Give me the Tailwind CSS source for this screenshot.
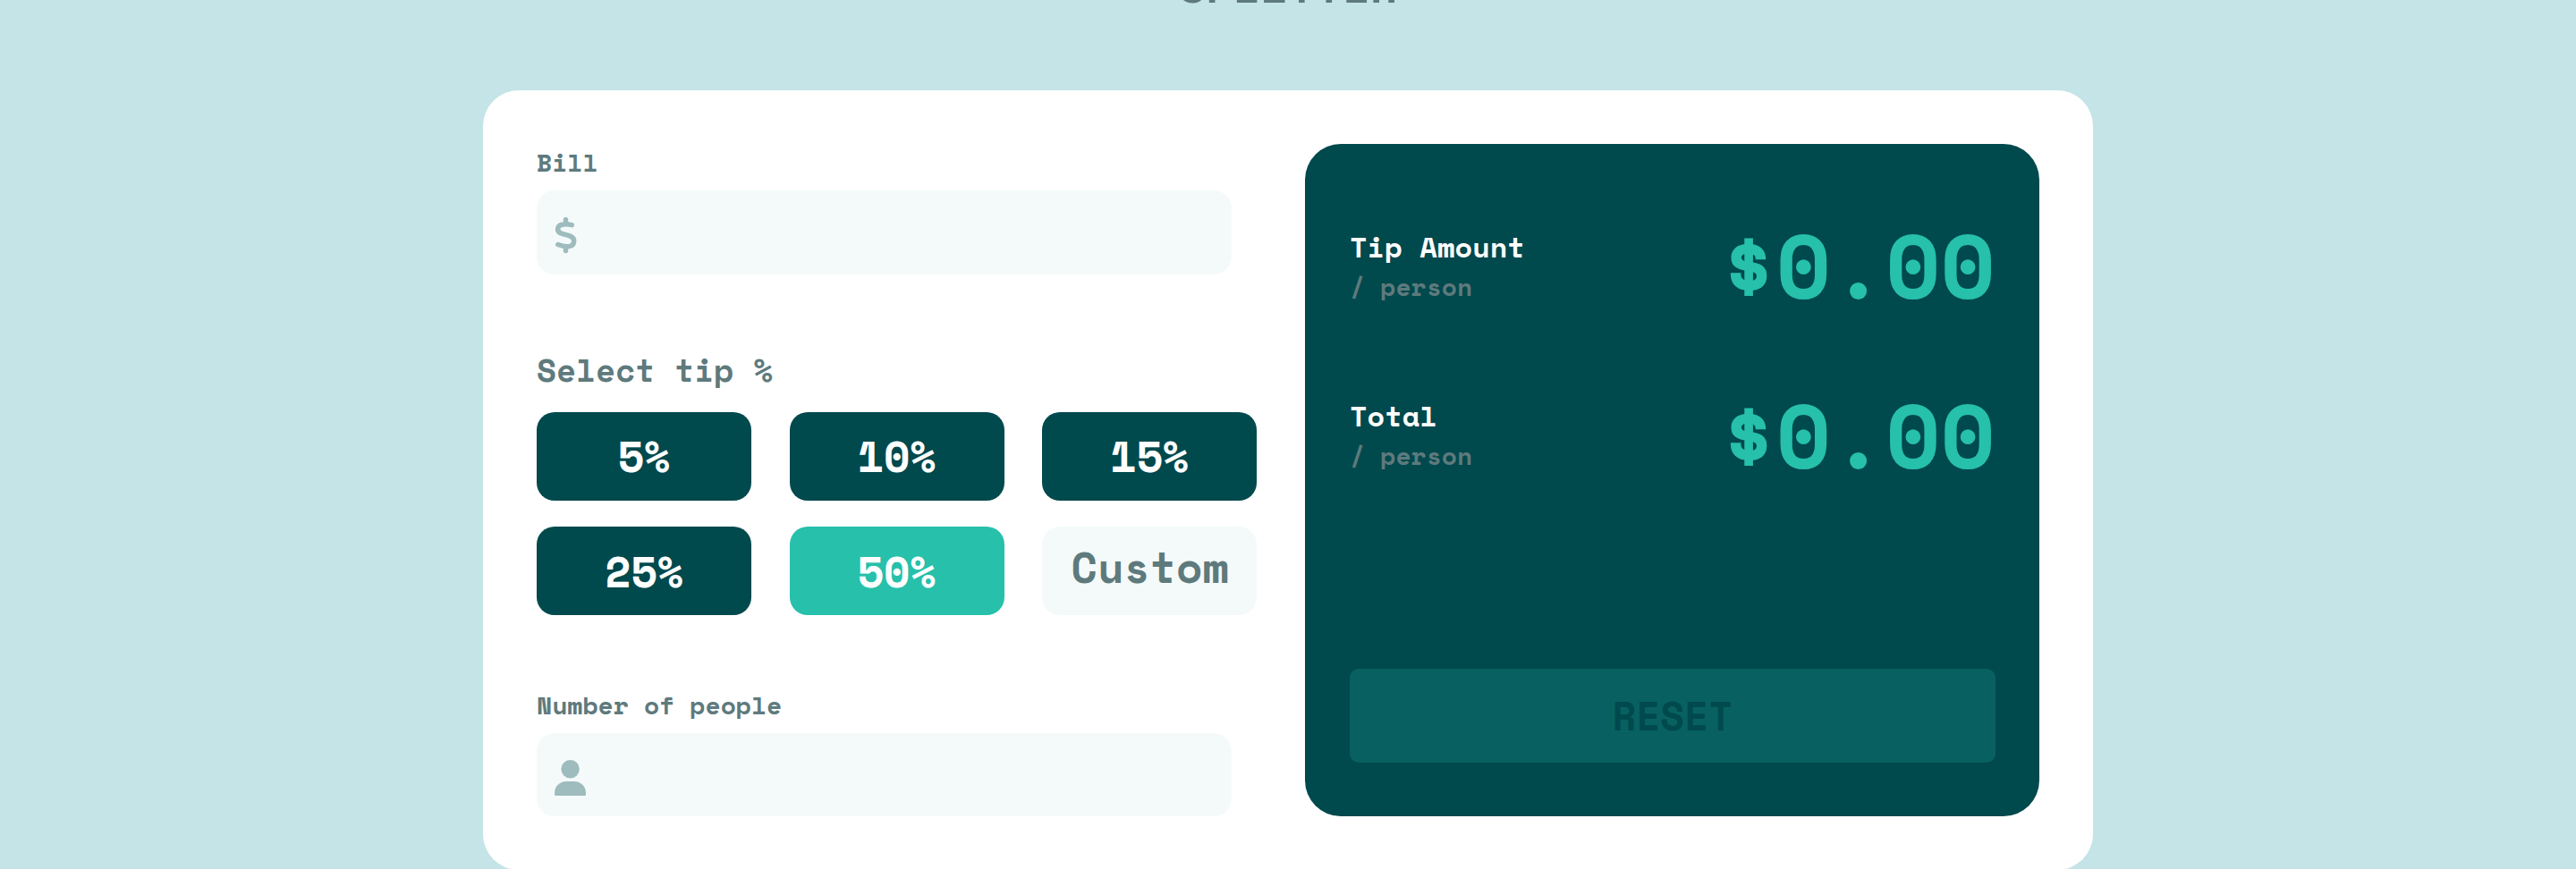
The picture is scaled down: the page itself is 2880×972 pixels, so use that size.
<!DOCTYPE html>
<html lang="en">
<head>
<meta charset="utf-8">
<title>Splitter</title>
<script src="https://cdn.jsdelivr.net/npm/@tailwindcss/browser@4"></script>
</head>
<body class="h-[972px] overflow-hidden bg-[#c5e4e7] font-['Space_Mono','Liberation_Mono',monospace] font-bold text-[#5e7a7d]">
  <h1 class="-mt-[48px] h-[149.3px] text-center text-[50px] leading-[64px]">SPLITTER</h1>
  <main class="mx-auto flex h-[872px] w-[1800px] rounded-[40px] bg-white p-[60px]">
    <section class="flex w-[777px] shrink-0 flex-col">
      <label class="mt-px mb-[11px] text-[28px] leading-[40px]">Bill</label>
      <div class="flex h-[93.3px] shrink-0 items-center rounded-[20px] bg-[#f4fafa] pl-5">
        <svg class="mt-[7px] h-10 w-[26px]" viewBox="0 0 26 40" fill="none" stroke="#9ebbbd" stroke-width="5.5" stroke-linecap="round" stroke-linejoin="round"><path d="M12.500 2.600v5M12.500 33v4.400M19.300 8.600C11 6.800 3.600 7.800 3.600 13.500C3.600 21.500 21.700 17.300 21.700 26.600C21.700 34.200 12.500 33.800 3.800 30.500"/></svg>
      </div>
      <h2 class="mt-[80.7px] mb-[20.2px] text-4xl leading-[54px]">Select tip %</h2>
      <div class="grid w-[806px] grid-cols-[240px_240px_240px] gap-x-[42.6px] gap-y-[29.4px] text-center text-5xl leading-[88px] text-white">
        <button class="h-[98.6px] rounded-[20px] bg-[#00494d] pb-[1.5px]">5%</button>
        <button class="h-[98.6px] rounded-[20px] bg-[#00494d] pb-[1.5px]">10%</button>
        <button class="h-[98.6px] rounded-[20px] bg-[#00494d] pb-[1.5px]">15%</button>
        <button class="h-[98.6px] rounded-[20px] bg-[#00494d] pt-[1px]">25%</button>
        <button class="h-[98.6px] rounded-[20px] bg-[#26c0ab] pt-[1px]">50%</button>
        <button class="h-[98.6px] rounded-[20px] bg-[#f4fafa] pb-[10px] pl-px text-[#5e7a7d]">Custom</button>
      </div>
      <label class="mt-auto mb-[10.6px] text-[28px] leading-[40px]">Number of people</label>
      <div class="flex h-[93.3px] shrink-0 items-center rounded-[20px] bg-[#f4fafa] pl-5">
        <svg class="mt-[7px] h-10 w-[35px]" viewBox="0 0 35 40" fill="#9ebbbd"><circle cx="17.600" cy="10.200" r="10.200"/><path d="M13 24h9a13 13 0 0 1 13 13v1.500a1.500 1.500 0 0 1-1.500 1.500h-32a1.500 1.500 0 0 1-1.500-1.500v-1.500a13 13 0 0 1 13-13z"/></svg>
      </div>
    </section>
    <section class="ml-[81.6px] flex flex-1 flex-col rounded-[40px] bg-[#00494d] pt-[91.6px] pr-[49.4px] pb-[60px] pl-[50.4px]">
      <div class="flex h-[189px] justify-between">
        <div>
          <p class="text-[32px] leading-[47.4px] text-white">Tip Amount</p>
          <p class="text-[28px] leading-[41.5px]">/ person</p>
        </div>
        <p class="pt-px text-[100px] leading-[84.3px] text-[#26c0ab]">$0.00</p>
      </div>
      <div class="flex justify-between">
        <div>
          <p class="text-[32px] leading-[47.4px] text-white">Total</p>
          <p class="text-[28px] leading-[41.5px]">/ person</p>
        </div>
        <p class="pt-[2px] text-[100px] leading-[84.3px] text-[#26c0ab]">$0.00</p>
      </div>
      <button class="mt-auto h-[105.3px] rounded-[10px] bg-[#086160] text-[44px] leading-[98px] text-[#00494d]">RESET</button>
    </section>
  </main>
</body>
</html>
